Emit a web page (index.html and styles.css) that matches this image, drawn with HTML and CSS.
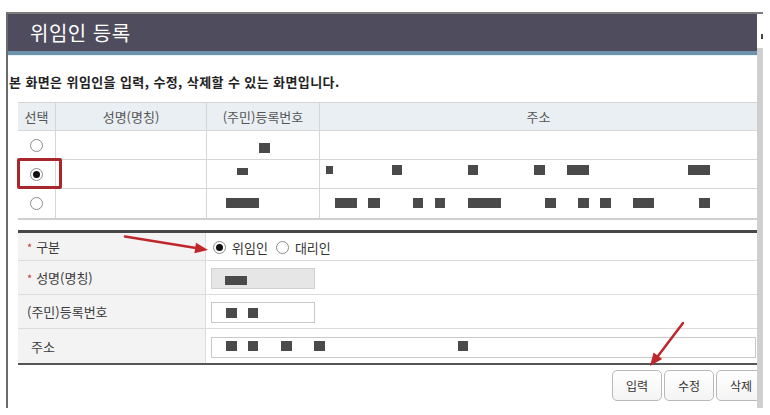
FILE: index.html
```html
<!DOCTYPE html>
<html lang="ko">
<head>
<meta charset="utf-8">
<title>위임인 등록</title>
<link rel="stylesheet" href="styles.css">
</head>
<body>
<div class="frame">
  <div class="main">
    <div class="titlebar"><h1 class="title">위임인 등록</h1></div>
    <p class="desc">본 화면은 위임인을 입력, 수정, 삭제할 수 있는 화면입니다.</p>

    <div class="list">
      <div class="th">선택</div>
      <div class="th">성명(명칭)</div>
      <div class="th">(주민)등록번호</div>
      <div class="th last">주소</div>

      <div class="td sel"><span class="radio"></span></div>
      <div class="td"></div>
      <div class="td"></div>
      <div class="td last"></div>

      <div class="td sel marked"><span class="radio on"></span><span class="mark"></span></div>
      <div class="td"></div>
      <div class="td"></div>
      <div class="td last"></div>

      <div class="td sel end"><span class="radio"></span></div>
      <div class="td end"></div>
      <div class="td end"></div>
      <div class="td end last"></div>
    </div>

    <div class="form">
      <div class="lbl"><span class="req">*</span>구분</div>
      <div class="val">
        <span class="radio on"></span><span class="opt">위임인</span>
        <span class="radio"></span><span class="opt">대리인</span>
      </div>

      <div class="lbl"><span class="req">*</span>성명(명칭)</div>
      <div class="val"><span class="inp short disabled"></span></div>

      <div class="lbl">(주민)등록번호</div>
      <div class="val"><span class="inp short"></span></div>

      <div class="lbl end indent">주소</div>
      <div class="val end"><span class="inp long"></span></div>
    </div>

    <div class="btns">
      <button class="btn">입력</button>
      <button class="btn">수정</button>
      <button class="btn">삭제</button>
    </div>
  </div>
  <div class="side">
    <div class="side-top"><span class="nub"></span></div>
    <div class="scroll"></div>
  </div>
</div>

<svg class="overlay" width="770" height="415" viewBox="0 0 770 415" xmlns="http://www.w3.org/2000/svg">
  <g fill="#4a4a4a">
    <rect x="259" y="143" width="11" height="10"/>
    <rect x="237" y="168" width="11" height="7"/>
    <rect x="326" y="166" width="7" height="8"/>
    <rect x="392" y="165" width="10" height="10"/>
    <rect x="468" y="165" width="10" height="10"/>
    <rect x="534" y="165" width="11" height="10"/>
    <rect x="567" y="165" width="22" height="10"/>
    <rect x="688" y="165" width="22" height="10"/>
    <rect x="226" y="198" width="33" height="10"/>
    <rect x="335" y="198" width="22" height="10"/>
    <rect x="368" y="198" width="12" height="10"/>
    <rect x="413" y="198" width="10" height="10"/>
    <rect x="435" y="198" width="10" height="10"/>
    <rect x="468" y="198" width="33" height="10"/>
    <rect x="545" y="198" width="11" height="10"/>
    <rect x="578" y="198" width="11" height="10"/>
    <rect x="600" y="198" width="11" height="10"/>
    <rect x="633" y="198" width="21" height="10"/>
    <rect x="699" y="198" width="11" height="10"/>
    <rect x="225" y="276" width="22" height="9"/>
    <rect x="226" y="308" width="11" height="10"/>
    <rect x="248" y="308" width="10" height="10"/>
    <rect x="226" y="341" width="11" height="10"/>
    <rect x="248" y="341" width="10" height="10"/>
    <rect x="281" y="341" width="11" height="10"/>
    <rect x="314" y="341" width="11" height="10"/>
    <rect x="458" y="341" width="10" height="10"/>
  </g>
  <g stroke="#c0272d" stroke-width="2.5" stroke-linecap="round" fill="#c0272d">
    <line x1="125" y1="236.5" x2="196" y2="248"/>
    <polygon stroke="none" points="208,250 194.4,253.2 196,242.8"/>
    <line x1="683" y1="323" x2="658" y2="356"/>
    <polygon stroke="none" points="650,366 662.2,358.9 653.6,352.5"/>
  </g>
</svg>
</body>
</html>
```

FILE: styles.css
```css
* { box-sizing: border-box; }

html, body {
  margin: 0;
  padding: 0;
  background: #ffffff;
}

body {
  width: 770px;
  height: 415px;
  overflow: hidden;
  position: relative;
  font-family: "Noto Sans CJK KR", "Noto Sans", sans-serif;
  color: #333;
}

.frame {
  margin: 12px 0 0 6px;
  width: 757px;
  height: 396px;
  border-top: 2px solid #7c7c7c;
  border-left: 2px solid #6a6a6a;
  display: flex;
}

.main {
  width: 749px;
  overflow: hidden;
}

.side {
  width: 6px;
  display: flex;
  flex-direction: column;
}

.side-top {
  height: 34px;
  position: relative;
}

.nub {
  position: absolute;
  right: 0;
  top: 20px;
  width: 2px;
  height: 5px;
  background: #444;
}

.scroll {
  flex: 1;
  background: #cfcfcf;
}

/* title bar */
.titlebar {
  height: 41px;
  background: #4f4c5e;
  border-bottom: 4px solid #6d92ac;
  box-shadow: 0 1px 0 #e2f6fb;
}

.title {
  margin: 0;
  padding-left: 22px;
  font-size: 20px;
  font-weight: normal;
  line-height: 37px;
  color: #ffffff;
  letter-spacing: 0.5px;
}

.desc {
  margin: 19px 0 0 1px;
  font-size: 13px;
  font-weight: bold;
  line-height: 16px;
  letter-spacing: 0.4px;
  color: #222;
}

/* list table */
.list {
  margin: 12px 0 0 10px;
  display: grid;
  grid-template-columns: 38px 151px 113px 1fr;
  grid-template-rows: 28px 29px 29px 29px;
  border-top: 1px solid #d4d4d4;
  border-bottom: 2px solid #cfcfcf;
}

.th, .td {
  border-right: 1px solid #d6d6d6;
  border-bottom: 1px solid #d6d6d6;
  display: flex;
  align-items: center;
  justify-content: center;
}

.th {
  background: #e9eff2;
  font-size: 13px;
  color: #555;
}

.td.end { border-bottom: none; }
.last { border-right: none; }

.sel { position: relative; }

.mark {
  position: absolute;
  left: -1px;
  top: -2px;
  width: 45px;
  height: 31px;
  border: 3px solid #a8272c;
  border-radius: 2px;
}

/* radios */
.radio {
  width: 13px;
  height: 13px;
  border: 1px solid #8c8c8c;
  border-radius: 50%;
  background: #fff;
  display: inline-flex;
  align-items: center;
  justify-content: center;
  flex: none;
}

.radio.on::after {
  content: "";
  width: 7px;
  height: 7px;
  border-radius: 50%;
  background: #111;
}

/* form */
.form {
  margin: 10px 0 0 10px;
  display: grid;
  grid-template-columns: 188px 1fr;
  grid-template-rows: 28px 34px 34px 34px;
  border-top: 3px solid #474747;
  border-bottom: 2px solid #555;
}

.lbl, .val {
  border-bottom: 1px solid #dcdcdc;
  display: flex;
  align-items: center;
}

.lbl.end, .val.end { border-bottom: none; }

.lbl {
  background: #f3f3f3;
  border-right: 1px solid #dcdcdc;
  padding-left: 9px;
  font-size: 13px;
  color: #3a3a3a;
}

.lbl.indent { padding-left: 13px; }

.req {
  color: #c0392b;
  font-size: 11px;
  margin-right: 4px;
}

.val {
  padding-left: 5px;
  padding-top: 2px;
  font-size: 13px;
  color: #333;
}

.val .radio { margin-left: 2px; }

.opt {
  margin: 0 6px 0 6px;
  font-size: 13px;
}

.inp {
  display: block;
  height: 21px;
  border: 1px solid #c9c9c9;
  background: #fff;
}

.inp.short { width: 104px; }
.inp.long { flex: 1; margin-right: 1px; }
.inp.disabled { background: #e6e6e6; border-color: #d0d0d0; }

/* buttons */
.btns {
  margin-top: 5px;
  padding-left: 604px;
  display: flex;
  gap: 2px;
}

.btn {
  flex: none;
  width: 50px;
  height: 31px;
  border: 1px solid #b9b9b9;
  border-radius: 5px;
  background: linear-gradient(#ffffff, #f4f4f4);
  font-family: "Noto Sans CJK KR", "Noto Sans", sans-serif;
  font-size: 12px;
  color: #333;
  padding: 0;
}

/* annotations drawn over the screenshot */
.overlay {
  position: absolute;
  left: 0;
  top: 0;
  pointer-events: none;
}
```
